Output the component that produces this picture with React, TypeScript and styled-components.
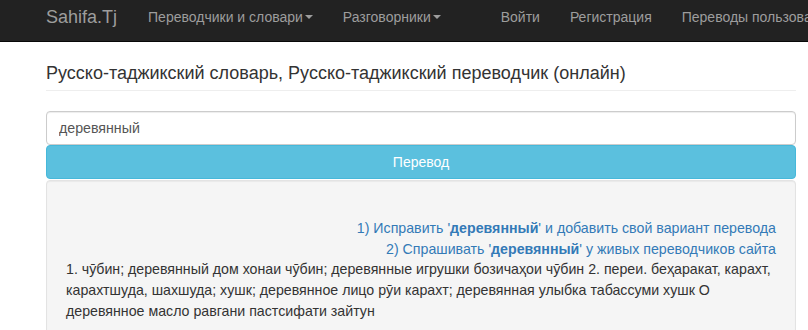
import React from "react";
import styled, { createGlobalStyle } from "styled-components";

const Global = createGlobalStyle`
  html, body { margin: 0; padding: 0; background: #fff; }
  body {
    font-family: "Liberation Sans", Arial, sans-serif;
    font-size: 14px;
    line-height: 20.8px;
    color: #333;
    overflow: hidden;
  }
  * { box-sizing: border-box; }
`;

const Navbar = styled.nav`
  background: #222;
  border-bottom: 1px solid #080808;
  height: 42px;
  overflow: hidden;
`;

const NavInner = styled.div`
  display: flex;
  align-items: center;
  height: 41px;
  padding-left: 46px;
  white-space: nowrap;
`;

const Brand = styled.a`
  font-size: 18px;
  color: #9d9d9d;
  padding-right: 31px;
  text-decoration: none;
  margin-top: -6px;
`;

const NavLink = styled.a<{ $gap?: number }>`
  color: #9d9d9d;
  font-size: 14px;
  text-decoration: none;
  margin-right: ${(p) => p.$gap ?? 30}px;
  margin-top: -6px;
  display: inline-flex;
  align-items: center;
`;

const Caret = styled.span`
  display: inline-block;
  width: 0;
  height: 0;
  margin-left: 2px;
  border-top: 4px solid #9d9d9d;
  border-left: 4px solid transparent;
  border-right: 4px solid transparent;
`;

const Container = styled.main`
  padding: 0 12px 0 46px;
`;

const Header = styled.h1`
  margin: 20px 0 0;
  padding-bottom: 6px;
  border-bottom: 1px solid #eee;
  font-size: 18px;
  font-weight: 400;
  line-height: 22px;
  color: #333;
  width: 750px;
`;

const Form = styled.div`
  margin-top: 20px;
  width: 750px;
`;

const Input = styled.input`
  display: block;
  width: 100%;
  height: 34px;
  padding: 6px 12px;
  font-family: inherit;
  font-size: 14.2px;
  color: #555;
  border: 1px solid #ccc;
  border-radius: 4px;
  box-shadow: inset 0 1px 1px rgba(0, 0, 0, 0.075);
  outline: none;
`;

const Button = styled.button`
  display: block;
  width: 100%;
  height: 34px;
  margin: 0;
  font-family: inherit;
  font-size: 14px;
  color: #fff;
  background: #5bc0de;
  border: 1px solid #46b8da;
  border-radius: 4px;
`;

const Well = styled.div`
  margin-top: 1px;
  background: #f5f5f5;
  border: 1px solid #e3e3e3;
  border-radius: 4px;
  padding: 16px 19px 30px;
  font-size: 14.2px;
  box-shadow: inset 0 1px 1px rgba(0, 0, 0, 0.05);
`;

const Spacer = styled.div`
  height: 20.8px;
`;

const LinkLine = styled.div`
  text-align: right;
`;

const A = styled.a`
  color: #337ab7;
  text-decoration: none;
`;

const Result = styled.div`
  color: #333;
`;

export default function App() {
  return (
    <>
      <Global />
      <Navbar>
        <NavInner>
          <Brand href="#">Sahifa.Tj</Brand>
          <NavLink href="#">
            Переводчики и словари<Caret />
          </NavLink>
          <NavLink href="#" $gap={60}>
            Разговорники<Caret />
          </NavLink>
          <NavLink href="#">Войти</NavLink>
          <NavLink href="#">Регистрация</NavLink>
          <NavLink href="#">Переводы пользователей</NavLink>
        </NavInner>
      </Navbar>
      <Container>
        <Header>Русско-таджикский словарь, Русско-таджикский переводчик (онлайн)</Header>
        <Form>
          <Input defaultValue="деревянный" />
          <Button>Перевод</Button>
          <Well>
            <Spacer />
            <LinkLine>
              <A href="#">
                1) Исправить '<b>деревянный</b>' и добавить свой вариант перевода
              </A>
            </LinkLine>
            <LinkLine>
              <A href="#">
                2) Спрашивать '<b>деревянный</b>' у живых переводчиков сайта
              </A>
            </LinkLine>
            <Result>
              1. чӯбин; деревянный дом хонаи чӯбин; деревянные игрушки бозичаҳои чӯбин 2. переи. беҳаракат, карахт,
              карахтшуда, шахшуда; хушк; деревянное лицо рӯи карахт; деревянная улыбка табассуми хушк О деревянное
              масло равгани пастсифати зайтун
            </Result>
          </Well>
        </Form>
      </Container>
    </>
  );
}
